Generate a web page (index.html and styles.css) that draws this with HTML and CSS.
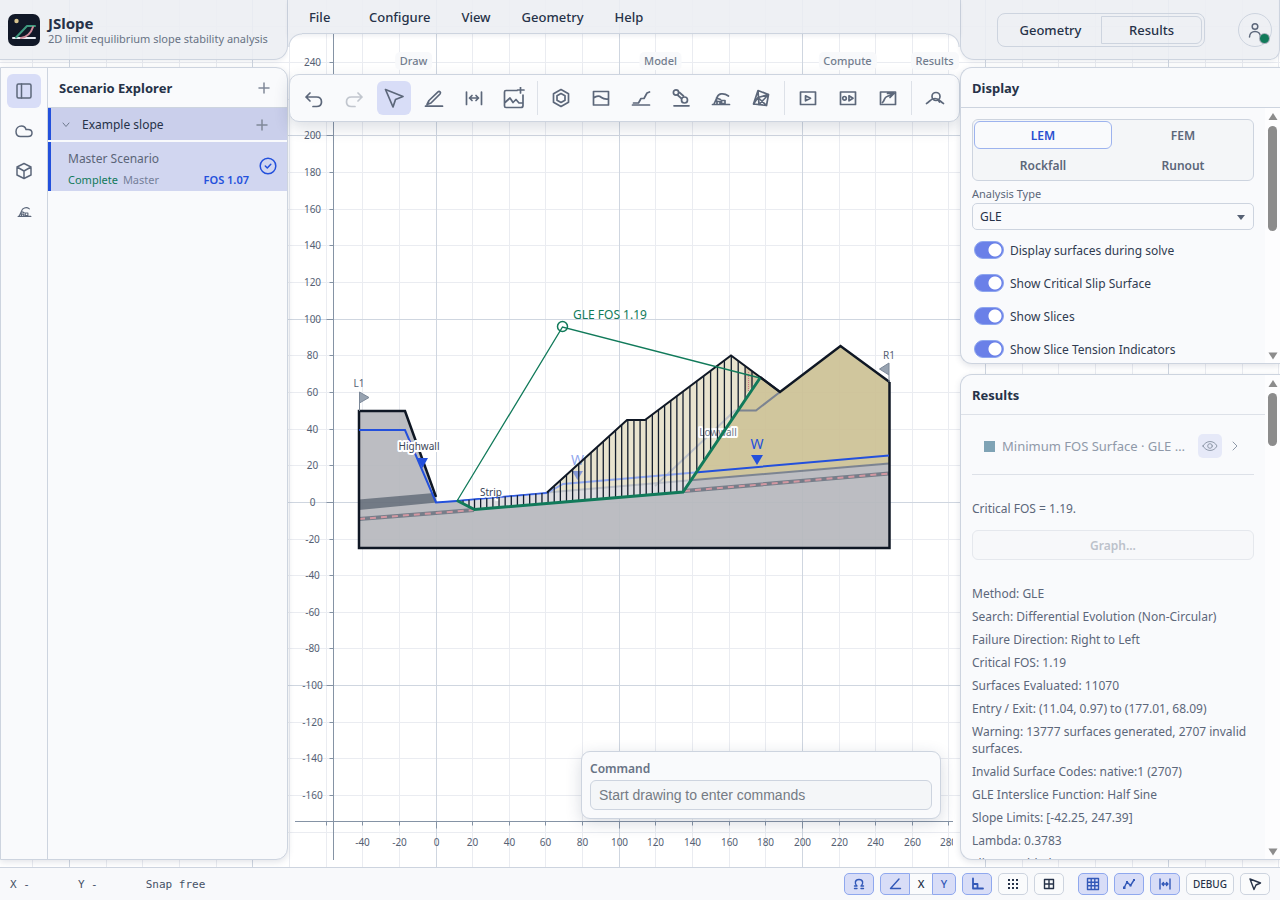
FILE: index.html
```html
<!DOCTYPE html>
<html lang="en">
<head>
<meta charset="utf-8">
<title>JSlope</title>
<link rel="stylesheet" href="styles.css">
</head>
<body>
<svg class="canvas" id="canvas" role="img" aria-label="Slope cross section">
  <defs>
    <clipPath id="plotClip"><rect x="290" y="30" width="663" height="830"/></clipPath>
    <clipPath id="mass"><path d="M457 501L547 492.5 627 420 645 420 731 355.5 760 378 683 492 474.5 509.5Z"/></clipPath>
  </defs>
  <g id="grid"></g>
  <g class="section">
    <path class="rock" d="M359 411H405L436 502 547 492.5 889.5 463V548H359Z"/>
    <path class="spoil" d="M547 492.5L627 420H645L731 355.5 780 392 840.5 346 889.5 382V463Z"/>
    <path class="seam" d="M359 499.500L434 493 437 502.500 359 510Z"/>
    <path class="thin-seam" d="M359 519L474 510M684 491L889 473.500"/>
    <path class="thin-seam-dash" d="M359 519L474 510M684 491L889 473.500"/>
    <path class="bound" d="M547 492.500L889 463.500"/>
    <path class="bound" d="M655 486L735 410.500H756L780 392"/>
  </g>
  <path class="ground" d="M889.500 382V548H359V411H405L436 497"/>
  <path class="water" d="M359 430H405L436 502.500 457 501 547 493 563 484 889 455.500"/>
  <g clip-path="url(#mass)">
    <path class="veil" d="M450 350H770V515H450Z"/>
    <path class="tension" d="M745 360L760 376 745 395Z"/>
    <path class="tension-dots" d="M748.500 372V391"/>
  </g>
  <g class="marks">
    <path d="M417 458H428L422.500 468Z"/>
    <path d="M751 455H763L757 465Z"/>
    <path class="faded" d="M572 471H583L577.500 480Z"/>
    <text x="757" y="449">W</text>
    <text class="faded" x="577.500" y="465">W</text>
  </g>
  <g class="names halo">
    <text x="419" y="450">Highwall</text>
    <text x="491" y="496">Strip</text>
    <text class="dim" x="718" y="436">Lowwall</text>
  </g>
  <path class="water thin" d="M457 501L547 493"/>
  <path class="ground thin" d="M547 492.500L627 420H645L731 355.500 780 392"/>
  <g id="slices" class="slices"></g>
  <path class="ground" d="M760 377L780 392 840.500 346 889.500 382"/>
  <path class="radius" d="M457 501L562.500 327 760 378"/>
  <path class="slip" d="M457 500.500L474.500 509.500 683 492 760 378"/>
  <circle class="pivot" cx="562.500" cy="326.500" r="5"/>
  <text class="fos" x="573" y="319">GLE FOS 1.19</text>
  <g class="flags">
    <path d="M359.500 411V392L369 397.500 359.500 403M889 382V363L879.500 369 889 375"/>
    <text x="359" y="387">L1</text><text x="889" y="359">R1</text>
  </g>
  <g id="axes" class="axes" clip-path="url(#plotClip)"></g>
</svg>

<div class="app">
  <div class="columns">
    <div class="left">
      <header class="brand">
        <svg class="logo" viewBox="0 0 32 32" aria-hidden="true">
          <rect width="32" height="32" rx="7" fill="#111827"/>
          <circle cx="8.500" cy="7" r="2.200" fill="#d8c48f"/>
          <path d="M5 24H27" stroke="#e8ecf2" stroke-width="2"/>
          <path d="M8 23.500L19 12H27" fill="none" stroke="#3f9a80" stroke-width="2"/>
          <path d="M13 24C19 23 23 19 25 13" fill="none" stroke="#cf8b9a" stroke-width="2"/>
        </svg>
        <div><h1>JSlope</h1><p>2D limit equilibrium slope stability analysis</p></div>
      </header>
      <section class="panel explorer">
        <nav class="rail" aria-label="Views">
          <button class="tool on" aria-label="Scenario explorer"><svg viewBox="0 0 18 18"><rect x="2" y="2" width="14" height="14" rx="1.500"/><path d="M6.500 2V16"/></svg></button>
          <button class="tool" aria-label="Materials"><svg viewBox="0 0 18 18"><path d="M5.500 14.500C2.500 14.500 1 12.500 1 9.500 1 6 3.500 4 6.500 4 8.500 4 10.500 5.500 11 7.500H13C15.500 7.500 17 9 17 11 17 13 15.500 14.500 13 14.500Z"/></svg></button>
          <button class="tool" aria-label="3D model"><svg viewBox="0 0 18 18"><path d="M9 1.500L16 5V13L9 16.500 2 13V5ZM2 5L9 9 16 5M9 9V16.500"/></svg></button>
          <button class="tool" aria-label="Loads"><svg class="small" viewBox="0 0 20 20"><path d="M1.500 16.500H18.500M3 16L6 9.500C7 6 12 3 16.500 6.500M5.500 10L9.500 11.500M5.500 13.500V10.500M6 16V13.500H9V16M11 12H14.500V15.500H11Z"/></svg></button>
        </nav>
        <div class="tree">
          <div class="head"><h2>Scenario Explorer</h2><button class="plus" aria-label="Add slope"><svg viewBox="0 0 12 12"><path d="M6 1V11M1 6H11"/></svg></button></div>
          <div class="slope-row">
            <svg class="chev" viewBox="0 0 10 10"><path d="M2 3L5 6.500 8 3"/></svg><span>Example slope</span>
            <button class="plus" aria-label="Add scenario"><svg viewBox="0 0 12 12"><path d="M6 1V11M1 6H11"/></svg></button>
          </div>
          <div class="scenario-row">
            <div class="info"><span>Master Scenario</span><div class="meta"><span class="done">Complete</span><span>Master</span><b>FOS 1.07</b></div></div>
            <svg class="check" viewBox="0 0 18 18"><circle cx="9" cy="9" r="7.800"/><path d="M6.300 9L8.300 11 11.800 7.300"/></svg>
          </div>
        </div>
      </section>
    </div>

    <main class="center">
      <nav class="menu" aria-label="Main menu"><button>File</button><button>Configure</button><button>View</button><button>Geometry</button><button>Help</button></nav>
      <div class="toolbar">
        <div class="group"><span class="label">Draw</span>
          <button class="tool" aria-label="Undo"><svg viewBox="0 0 20 20"><path d="M6 5L2 9 6 13M2 9H12.500C15.500 9 17.500 11 17.500 14S15.500 18.500 12.500 18.500H9"/></svg></button>
          <button class="tool" disabled aria-label="Redo"><svg viewBox="0 0 20 20"><path d="M14 5L18 9 14 13M18 9H7.500C4.500 9 2.500 11 2.500 14S4.500 18.500 7.500 18.500H11"/></svg></button>
          <button class="tool on" aria-label="Select"><svg viewBox="0 0 20 20"><path d="M1.500 1.500L19 8.500 11.500 11.500 9 19Z"/></svg></button>
          <button class="tool" aria-label="Draw line"><svg viewBox="0 0 20 20"><path d="M1.500 18.200H18.500M3 16.500L5 12.500 14 3.800C15.500 2.500 17.300 4.500 16 6L7 15Z"/></svg></button>
          <button class="tool" aria-label="Measure"><svg viewBox="0 0 20 20"><path d="M2.500 4V16.500M17.500 4V16.500M5.500 10H14.500M8 7.500L5.500 10 8 12.500M12 7.500L14.500 10 12 12.500"/></svg></button>
          <button class="tool" aria-label="Add image"><svg class="big" viewBox="0 0 22 22"><path d="M14 3.500H3Q1.500 3.500 1.500 5V19Q1.500 20.500 3 20.500H18Q20 20.500 20 18.500V8M17.500 0V6M14.500 3H21M2 15.500L7 11 10 15.500 13 12.500 16 16H19.500"/></svg></button>
        </div>
        <i></i>
        <div class="group"><span class="label">Model</span>
          <button class="tool" aria-label="Materials"><svg viewBox="0 0 20 20"><path d="M10 1.500L17.500 5.700V14.300L10 18.500 2.500 14.300V5.700ZM10 5.500L14 7.700V12.300L10 14.500 6 12.300V7.700Z"/></svg></button>
          <button class="tool" aria-label="Water table"><svg viewBox="0 0 20 20"><path d="M2.500 3.500H17.500V17H2.500ZM2.500 10C6 7.500 8 7.500 10.500 9.500S14 11.500 17.500 11"/></svg></button>
          <button class="tool" aria-label="Slope surface"><svg viewBox="0 0 20 20"><path d="M1.500 17H18.500M2.500 15H7.500L10 10.500H13L16 5 18.500 4"/></svg></button>
          <button class="tool" aria-label="Anchors"><svg viewBox="0 0 20 20"><path d="M3 17.800H18M6.500 7L10.500 10.500M8.500 4.500L12.500 8"/><circle cx="5" cy="4.500" r="2.600"/><circle cx="13.500" cy="12" r="3"/></svg></button>
          <button class="tool" aria-label="Loads"><svg viewBox="0 0 20 20"><path d="M1.500 16.500H18.500M3 16L6 9.500C7 6 12 4 17.500 8M5.500 10L9.500 11.500M5.500 13.500V10.500M6 16V13.500H9V16M10.500 12.500H14V15.500H10.500Z"/></svg></button>
          <button class="tool" aria-label="Mesh"><svg viewBox="0 0 20 20"><path d="M7 2.500L17.500 6.500 15.500 17.500 2.500 16ZM7 2.500L8 17M17.500 6.500L7 9.500 15.500 17.500M8.500 16L17.500 6.500M7 9.500L2.500 16"/></svg></button>
        </div>
        <i></i>
        <div class="group"><span class="label">Compute</span>
          <button class="tool" aria-label="Run"><svg viewBox="0 0 20 20"><path d="M2.500 4H17.500V16.500H2.500ZM7.500 7.800V12.800L12.500 10.300Z"/></svg></button>
          <button class="tool" aria-label="Run all"><svg viewBox="0 0 20 20"><path d="M2.500 4H17.500V16.500H2.500ZM11 7.800V12.800L15 10.300Z"/><circle cx="6.500" cy="10.300" r="1.800"/></svg></button>
          <button class="tool" aria-label="Sensitivity"><svg viewBox="0 0 20 20"><path d="M2.500 4H17.500V16.500H2.500ZM4.500 14.500C7 12 6 9.500 9 8.500L15.500 6M9.500 5.500H16L12 9.500"/></svg></button>
        </div>
        <i></i>
        <div class="group"><span class="label">Results</span>
          <button class="tool" aria-label="Query results"><svg viewBox="0 0 20 20"><path d="M1.500 15.500C5 14 5 10.500 10 10.500S15 14 18.500 15.500M13 12L14.500 14"/><circle cx="11" cy="8.500" r="4"/></svg></button>
        </div>
      </div>
      <div class="command"><label for="cmd">Command</label><input id="cmd" type="text" placeholder="Start drawing to enter commands"></div>
    </main>

    <div class="right">
      <header class="account">
        <div class="modes"><button>Geometry</button><button class="on">Results</button></div>
        <button class="avatar" aria-label="Account"><svg viewBox="0 0 16 16"><circle cx="8" cy="4.500" r="2.800"/><path d="M2.500 15C2.500 7.500 13.500 7.500 13.500 15"/></svg><span class="dot"></span></button>
      </header>
      <div class="stack">
        <section class="panel display">
          <div class="head"><h2>Display</h2></div>
          <div class="scroller">
            <div class="body">
              <div class="types"><button class="on">LEM</button><button>FEM</button><button>Rockfall</button><button>Runout</button></div>
              <label class="caption" for="atype">Analysis Type</label>
              <div class="select"><select id="atype"><option>GLE</option></select></div>
              <label class="switch"><input type="checkbox" checked>Display surfaces during solve</label>
              <label class="switch"><input type="checkbox" checked>Show Critical Slip Surface</label>
              <label class="switch"><input type="checkbox" checked>Show Slices</label>
              <label class="switch"><input type="checkbox" checked>Show Slice Tension Indicators</label>
            </div>
            <div class="bar"><svg viewBox="0 0 10 8"><path d="M5 0L9.500 7H.5Z"/></svg><span class="thumb long"></span><svg class="end" viewBox="0 0 10 8"><path d="M5 7.500L9.500 .5H.5Z"/></svg></div>
          </div>
        </section>
        <section class="panel results">
          <div class="scroller">
            <div class="page">
              <div class="head"><h2>Results</h2></div>
              <div class="body">
                <div class="surface"><span class="swatch"></span><span class="name">Minimum FOS Surface · GLE FOS 1.19</span>
                  <button class="eye" aria-label="Toggle visibility"><svg viewBox="0 0 16 16"><path d="M1 8C4 2 12 2 15 8 12 14 4 14 1 8Z"/><circle cx="8" cy="8" r="2.300"/></svg></button>
                  <svg class="next" viewBox="0 0 10 10"><path d="M3 1L7 5 3 9"/></svg></div>
                <p class="critical">Critical FOS = 1.19.</p>
                <button class="graph" disabled>Graph...</button>
                <ul class="facts">
                  <li>Method: GLE</li><li>Search: Differential Evolution (Non-Circular)</li><li>Failure Direction: Right to Left</li><li>Critical FOS: 1.19</li><li>Surfaces Evaluated: 11070</li><li>Entry / Exit: (11.04, 0.97) to (177.01, 68.09)</li><li>Warning: 13777 surfaces generated, 2707 invalid surfaces.</li><li>Invalid Surface Codes: native:1 (2707)</li><li>GLE Interslice Function: Half Sine</li><li>Slope Limits: [-42.25, 247.39]</li><li>Lambda: 0.3783</li><li>Slices enabled: 50</li>
                </ul>
              </div>
            </div>
            <div class="bar"><svg viewBox="0 0 10 8"><path d="M5 0L9.500 7H.5Z"/></svg><span class="thumb"></span><svg class="end" viewBox="0 0 10 8"><path d="M5 7.500L9.500 .5H.5Z"/></svg></div>
          </div>
        </section>
      </div>
    </div>
  </div>

  <footer class="status">
    <div class="readout"><span>X -</span><span>Y -</span><span>Snap free</span></div>
    <div class="snaps">
      <button class="on" aria-label="Snap"><svg viewBox="0 0 14 14"><path d="M2.500 9H5C2.500 7 2.500 2.500 7 2.500S11.500 7 9 9H11.500M2.500 11.500H5M9 11.500H11.500"/></svg></button>
      <div class="joined"><button class="on" aria-label="Angle"><svg viewBox="0 0 14 14"><path d="M11 2L2.500 11.500H12.500"/></svg></button><button>X</button><button class="on">Y</button></div>
      <button class="on" aria-label="Ortho"><svg viewBox="0 0 14 14"><path d="M3 1.500V11.500H13M3 7H7.500V11.500" stroke-width="1.800"/></svg></button>
      <button aria-label="Grid snap"><svg viewBox="0 0 14 14"><path d="M2 3H12M2 7H12M2 11H12" stroke-linecap="butt" stroke-dasharray="2 2" stroke-width="2"/></svg></button>
      <button aria-label="Cells"><svg viewBox="0 0 14 14"><path d="M2.500 2.500H11.500V11.500H2.500ZM7 2.500V11.500M2.500 7H11.500"/></svg></button>
      <button class="on far" aria-label="Grid"><svg viewBox="0 0 14 14"><path d="M1.500 1.500H12.500V12.500H1.500ZM5.200 1.500V12.500M8.800 1.500V12.500M1.500 5.200H12.500M1.500 8.800H12.500"/></svg></button>
      <button class="on" aria-label="Vertices"><svg viewBox="0 0 14 14"><path d="M2 11L5 5 8.500 8.500 12 3"/><path d="M1 9.500H3.500V12H1ZM4 4H6V6H4ZM7.500 7.500H9.500V9.500H7.500ZM11 2H13V4H11Z" fill="currentColor" stroke="none"/></svg></button>
      <button class="on" aria-label="Dimensions"><svg viewBox="0 0 14 14"><path d="M2 2V12M12 2V12M4 7H10M5.500 5.500L4 7 5.500 8.500M8.500 5.500L10 7 8.500 8.500"/></svg></button>
      <button class="debug">DEBUG</button>
      <button aria-label="Pointer"><svg viewBox="0 0 14 14"><path d="M2 2L12.500 6 8 8 6 12.500Z"/></svg></button>
    </div>
  </footer>
</div>
<script src="plot.js"></script>
</body>
</html>
```

FILE: plot.js
```js
(function () {
  var NS = "http://www.w3.org/2000/svg";
  var scale = 1.832, x0 = 436, y0 = 502.4, axisX = 333.5, axisY = 821.5;
  function px(v) { return Math.floor(x0 + v * scale) + 0.5; }
  function py(v) { return Math.floor(y0 - v * scale) + 0.5; }
  function line(parent, x1, y1, x2, y2, cls) {
    var el = document.createElementNS(NS, "path");
    el.setAttribute("d", "M" + x1 + " " + y1 + "L" + x2 + " " + y2);
    if (cls) el.setAttribute("class", cls);
    parent.appendChild(el);
  }
  function label(parent, x, y, text) {
    var el = document.createElementNS(NS, "text");
    el.setAttribute("x", x);
    el.setAttribute("y", y);
    el.textContent = text;
    parent.appendChild(el);
  }

  var grid = document.getElementById("grid"), v;
  [false, true].forEach(function (major) {
    for (v = -240; v < 2000; v += 20) {
      if ((v % 100 === 0) === major) line(grid, px(v), 0, px(v), 3000, major ? "major" : "minor");
    }
    for (v = 260; v > -1400; v -= 20) {
      if ((v % 100 === 0) === major) line(grid, 0, py(v), 6000, py(v), major ? "major" : "minor");
    }
  });

  var axes = document.getElementById("axes");
  line(axes, axisX, 34, axisX, 860);
  line(axes, 295, axisY, 953, axisY);
  for (v = -60; v <= 280; v += 20) {
    line(axes, px(v), axisY, px(v), axisY + (v % 100 ? 4 : 7));
    if (v > -60) label(axes, px(v), 846, v);
  }
  for (v = 240; v >= -160; v -= 20) {
    line(axes, axisX - (v % 100 ? 4 : 7), py(v), axisX, py(v));
    label(axes, 312.5, py(v) + 3, v);
  }

  var top = [[457, 501], [547, 492.5], [627, 420], [645, 420], [731, 355.5], [760, 378]];
  var base = [[457, 501], [474.5, 509.5], [683, 492], [760, 378]];
  function at(poly, x) {
    for (var i = 1; i < poly.length; i++) {
      if (x <= poly[i][0]) {
        var a = poly[i - 1], b = poly[i];
        return a[1] + (b[1] - a[1]) * (x - a[0]) / (b[0] - a[0]);
      }
    }
    return poly[poly.length - 1][1];
  }
  var slices = document.getElementById("slices"), xs = [463, 469], i;
  for (i = 0; i <= 34; i++) xs.push(474.5 + i * 208.5 / 34);
  for (i = 1; i <= 10; i++) xs.push(683 + i * 6.9);
  xs.forEach(function (x) { line(slices, x, at(top, x), x, at(base, x)); });
})();
```

FILE: styles.css
```css
* { box-sizing: border-box; }
:root {
  --ink: #263248; --mid: #5c677a; --soft: #687385; --line: #cdd4df;
  --panel: #f9fafc; --head: rgba(236, 238, 242, .88); --blue: #2350dc; --tint: #d8ddf7;
}
body { margin: 0; height: 100vh; overflow: hidden; background: #fff; color: var(--ink); font: 12px/16px "Noto Sans", sans-serif; }
h1, h2, p, ul { margin: 0; padding: 0; }
button, input, select { font: inherit; color: inherit; }
button { padding: 0; border: 0; background: none; }
svg { fill: none; stroke: currentColor; stroke-linejoin: round; stroke-linecap: round; display: block; }

.canvas { position: absolute; inset: 0; width: 100%; height: 100%; stroke: none; stroke-linecap: butt; stroke-linejoin: miter; }
.minor { stroke: #eaecf1; }
.major { stroke: #cfd6e0; }
.section { opacity: .93; }
.rock { fill: #b7b9be; }
.spoil { fill: #cdc296; }
.seam { fill: #68707c; }
.thin-seam { stroke: #6c7481; stroke-width: 4; }
.thin-seam-dash { stroke: #d0909a; stroke-width: 2; stroke-dasharray: 6 5; }
.bound { stroke: #737b89; stroke-width: 2; }
.ground { stroke: #0f1724; stroke-width: 2.500; }
.water { stroke: #2350dc; stroke-width: 2; }
.ground.thin { stroke-width: 2; }
.water.thin { stroke-width: 1; }
.veil { fill: #fff; opacity: .5; }
.tension { fill: #cbb68d; opacity: .6; }
.tension-dots { stroke: #cc7385; stroke-dasharray: 1 1; }
.marks { fill: var(--blue); font-size: 14px; text-anchor: middle; }
.faded { opacity: .5; }
.names { fill: #3c4658; font-size: 10px; text-anchor: middle; }
.names .dim { fill: #6f7888; }
.halo { stroke: #fff; stroke-width: 4; paint-order: stroke; stroke-linejoin: round; }
.slices { stroke: #131d2d; stroke-width: 1.300; }
.radius { stroke: #117a5a; stroke-width: 1.300; }
.slip { stroke: #117a5a; stroke-width: 3; }
.pivot { stroke: #117a5a; stroke-width: 1.500; }
.fos { fill: #117a5a; font-size: 12px; }
.flags { fill: #98a3b1; stroke: #7c8898; font-size: 10px; text-anchor: middle; }
.flags text { stroke: none; fill: #566174; }
.axes { stroke: #8593a5; font-size: 10px; text-anchor: middle; }
.axes text { stroke: none; fill: #566174; }

.app { position: relative; height: 100%; display: flex; flex-direction: column; }
.columns { flex: 1; min-height: 0; display: grid; grid-template-columns: 288px 1fr 320px; }
.left, .right { display: flex; flex-direction: column; min-height: 0; gap: 7px; padding-bottom: 7px; }
.brand, .account { height: 60px; display: flex; align-items: center; background: var(--head); border-bottom: 1px solid var(--line); box-shadow: 0 2px 4px rgba(40, 55, 90, .08); }
.brand { padding-left: 8px; gap: 8px; border-right: 1px solid var(--line); border-bottom-right-radius: 14px; clip-path: inset(0 0 -8px 0); }
.logo { width: 32px; height: 32px; stroke: none; }
h1 { font-size: 15px; line-height: 18px; }
.brand p { font-size: 11px; line-height: 14px; color: var(--soft); }
.panel { background: var(--panel); border: 1px solid var(--line); box-shadow: 0 2px 6px rgba(40, 55, 90, .14); overflow: hidden; }
.explorer { flex: 1; display: flex; border-radius: 0 12px 12px 0; }
.rail { width: 47px; padding: 6px; display: flex; flex-direction: column; gap: 6px; border-right: 1px solid var(--line); }
.tool { width: 34px; height: 34px; border-radius: 6px; display: grid; place-items: center; color: var(--mid); flex: none; }
.tool svg { width: 20px; height: 20px; stroke-width: 1.700; }
.tool .big { width: 22px; height: 22px; }
.rail svg { width: 18px; height: 18px; stroke-width: 1.500; }
.rail .small { width: 15px; height: 15px; }
.tool.on { background: var(--tint); }
.tool:disabled { opacity: .35; }
.tree { flex: 1; }
.head { height: 40px; padding: 0 11px; display: flex; align-items: center; justify-content: space-between; border-bottom: 1px solid var(--line); }
h2 { font-size: 13px; line-height: 20px; }
.plus { width: 24px; height: 24px; display: grid; place-items: center; color: #808999; }
.plus svg { width: 12px; height: 12px; stroke-width: 1.500; }
.slope-row { height: 32px; padding: 1px 13px 0 10px; display: flex; align-items: center; background: #cacfeb; border-left: 3px solid var(--blue); }
.slope-row span { flex: 1; margin-left: 11px; }
.chev { width: 10px; height: 10px; color: #6f7a8e; }
.scenario-row { margin-top: 2px; padding: 9px 10px 3px 17px; display: flex; align-items: flex-start; gap: 10px; background: #d1d6f0; border-left: 3px solid var(--blue); color: #5b6578; }
.info { flex: 1; }
.meta { display: flex; gap: 5px; margin-top: 5px; font-size: 11px; color: #75809a; }
.meta .done { color: #117a5a; }
.meta b { margin-left: auto; color: var(--blue); font-weight: 600; }
.check { width: 18px; height: 18px; margin-top: 6px; color: var(--blue); stroke-width: 1.500; }

.center { display: flex; flex-direction: column; min-width: 0; }
.menu { position: relative; height: 34px; padding-left: 21px; display: flex; align-items: center; gap: 31px; background: var(--head); border-bottom: 1px solid var(--line); font-size: 13px; font-weight: 500; box-shadow: 0 2px 4px rgba(40, 55, 90, .08); }
.menu button { min-width: 29px; text-align: left; }
.menu::before, .menu::after { content: ""; position: absolute; top: 33px; left: 0; width: 14px; height: 14px; background: radial-gradient(circle at 14px 14px, transparent 12px, var(--line) 13px, #edeff3 14px); }
.menu::after { left: auto; right: 0; background: radial-gradient(circle at 0 14px, transparent 12px, var(--line) 13px, #edeff3 14px); }
.toolbar { align-self: center; margin-top: 40px; padding: 6px 7px; display: flex; gap: 6px; background: var(--panel); border: 1px solid var(--line); border-radius: 10px; box-shadow: 0 6px 16px rgba(40, 55, 90, .16); }
.toolbar i { width: 1px; background: #dde1e8; }
.group { position: relative; display: flex; gap: 6px; }
.label { position: absolute; bottom: 100%; left: 50%; translate: -50%; margin-bottom: 11px; padding: 1px 5px; border-radius: 5px; background: #f8f9fb; color: #727d8e; font-size: 11px; font-weight: 500; }
.command { width: 360px; margin: auto 19px 48px auto; padding: 9px 8px 8px; background: var(--panel); border: 1px solid var(--line); border-radius: 9px; box-shadow: 0 4px 16px rgba(40, 55, 90, .18); }
.command label { display: block; font-weight: 600; color: var(--soft); }
.command input { display: block; width: 100%; height: 30px; margin-top: 3px; padding: 0 8px; border: 1px solid var(--line); border-radius: 6px; background: #f4f6f8; font: 14px "Liberation Sans", sans-serif; }
.command input::placeholder { color: #757b84; }

.account { justify-content: flex-end; gap: 33px; padding-right: 7px; border-left: 1px solid var(--line); border-right: 1px solid var(--line); border-radius: 0 0 10px 14px; }
.modes { display: flex; padding: 2px; border: 1px solid var(--line); border-radius: 8px; font-size: 13px; font-weight: 500; }
.modes button { width: 101px; height: 28px; border: 1px solid transparent; }
.modes .on { border-color: var(--line); border-radius: 0 6px 6px 0; }
.avatar { position: relative; width: 34px; height: 34px; border: 1px solid var(--line); border-radius: 50%; display: grid; place-items: center; color: var(--mid); }
.avatar svg { width: 16px; height: 16px; stroke-width: 1.500; }
.dot { position: absolute; right: 2px; bottom: 3px; width: 9px; height: 9px; border-radius: 50%; background: #117a5a; box-shadow: 0 0 0 1px #a5adb7; }
.stack { flex: 1; min-height: 0; display: flex; flex-direction: column; gap: 10px; }
.display, .results { display: flex; flex-direction: column; min-height: 0; border-right: 0; border-radius: 12px 0 0 12px; }
.display { flex: 11 1 0; }
.results { flex: 18 1 0; }
.scroller { flex: 1; min-height: 0; display: flex; overflow: hidden; }
.body { flex: 1; min-width: 0; padding: 11px; }
.page { flex: 1; min-width: 0; }
.bar { width: 15px; padding: 5px 3px 3px; display: flex; flex-direction: column; gap: 5px; background: #fdfdfe; }
.bar svg { width: 10px; height: 8px; fill: #8c8c8c; stroke: none; flex: none; }
.bar .end { margin-top: auto; }
.thumb { width: 9px; height: 53px; border-radius: 5px; background: #8c8c8c; }
.thumb.long { height: 105px; }
.types { display: grid; grid-template-columns: 1fr 1fr; gap: 2px; padding: 1px; border: 1px solid var(--line); border-radius: 6px; background: #f4f6f8; color: var(--mid); font-weight: 600; }
.types button { height: 28px; padding-top: 1px; border: 1px solid transparent; border-radius: 6px; }
.types .on { background: var(--panel); border-color: #9db3ee; color: #2a4fd0; }
.caption { display: block; margin: 5px 0 1px; font-size: 11px; color: var(--mid); }
.select { position: relative; }
.select::after { content: ""; position: absolute; right: 9px; top: 12px; border: 4px solid transparent; border-top: 5px solid #566174; border-bottom: 0; }
.select select { appearance: none; display: block; width: 100%; height: 27px; padding: 1px 7px 0; border: 1px solid var(--line); border-radius: 5px; background: var(--panel); }
.switch { display: flex; align-items: center; gap: 6px; height: 33px; padding-left: 2px; color: #303b50; }
.select + .switch { margin-top: 4px; }
.switch input { appearance: none; width: 30px; height: 18px; margin: 0 0 2px; border: 1px solid #8ea6ef; border-radius: 9px; background: radial-gradient(circle at 20px 8px, #fff 6px, transparent 7px) #6a80e8; }
.results .head { border-color: #dde1e8; }
.surface { height: 49px; padding: 0 14px 8px 12px; display: flex; align-items: center; border-bottom: 1px solid #dde1e8; color: #8f99a9; font-size: 13px; }
.swatch { width: 11px; height: 11px; margin-right: 7px; background: #7fa3b5; flex: none; }
.name { flex: 1; min-width: 0; overflow: hidden; white-space: nowrap; text-overflow: ellipsis; line-height: 20px; }
.eye { width: 24px; height: 24px; margin: 0 8px 0 9px; border-radius: 5px; background: #e6e9f8; display: grid; place-items: center; flex: none; }
.eye svg { width: 16px; height: 16px; }
.next { width: 10px; height: 10px; flex: none; }
.critical { margin-top: 24px; line-height: 20px; color: var(--mid); }
.graph { width: 100%; height: 30px; margin-top: 11px; padding-top: 1px; border: 1px solid #e5e8ed; border-radius: 6px; background: #f7f8fa; color: #bcc2cb; font-weight: 600; }
.facts { list-style: none; margin-top: 25px; display: grid; gap: 6px; line-height: 17px; color: var(--mid); }

.status { height: 33px; padding: 0 10px; display: flex; align-items: center; justify-content: space-between; background: #f8f9fb; border-top: 1px solid var(--line); }
.readout { display: flex; gap: 48px; font: 11px "DejaVu Sans Mono", monospace; color: #465166; }
.snaps { display: flex; gap: 6px; font-size: 11px; font-weight: 500; }
.snaps button { width: 30px; height: 22px; display: grid; place-items: center; border: 1px solid var(--line); border-radius: 5px; background: #fafbfc; }
.snaps .on { background: var(--tint); border-color: #8fa8ee; color: #3258b8; }
.snaps svg { width: 14px; height: 14px; stroke-width: 1.400; }
.snaps .far { margin-left: 8px; }
.snaps .debug { width: 48px; font-size: 10px; }
.joined { display: flex; }
.joined button { border-radius: 0; width: 24px; }
.joined button:first-child { border-radius: 5px 0 0 5px; width: 30px; }
.joined button:last-child { border-radius: 0 5px 5px 0; }
.joined button:nth-child(2) { border-inline: 0; width: 22px; }
```
